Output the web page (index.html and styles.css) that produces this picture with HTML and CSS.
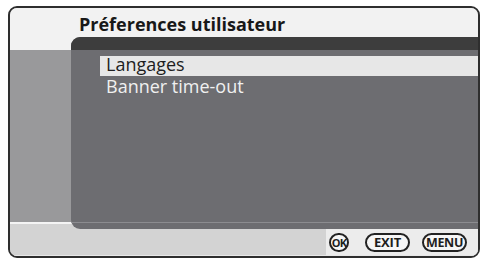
FILE: index.html
```html
<!DOCTYPE html>
<html lang="fr">
<head>
<meta charset="utf-8">
<title>Préferences utilisateur</title>
<link rel="stylesheet" href="styles.css">
</head>
<body>
<div class="frame">
  <div class="header-bg"></div>
  <div class="body-bg"></div>
  <div class="sep"></div>
  <div class="footer">
    <div class="footer-left"></div>
    <div class="footer-keys">
      <span class="key key-round">OK</span>
      <span class="key">EXIT</span>
      <span class="key key-menu">MENU</span>
    </div>
  </div>
  <h1 class="title">Préferences utilisateur</h1>
  <div class="panel">
    <div class="panel-bar"></div>
    <ul class="list">
      <li class="item selected">Langages</li>
      <li class="item">Banner time-out</li>
    </ul>
    <div class="panel-bottom"></div>
  </div>
</div>
</body>
</html>
```
FILE: styles.css
```css
html, body {
  margin: 0;
  padding: 0;
  background: #ffffff;
}
body {
  font-family: "Open Sans", "DejaVu Sans", sans-serif;
}
.frame {
  margin: 6px 0 0 8px;
  width: 468px;
  height: 248px;
  border: 2px solid #2e2e2e;
  border-radius: 9px;
  overflow: hidden;
  display: grid;
  grid-template-columns: 61px 1fr;
  grid-template-rows: 29px 13px 172px 2px 5px 27px;
  background: #d3d3d3;
}
.header-bg {
  grid-column: 1 / 3;
  grid-row: 1 / 3;
  background: #f2f2f2;
}
.body-bg {
  grid-column: 1 / 3;
  grid-row: 3 / 4;
  background: #99999b;
}
.sep {
  grid-column: 1 / 3;
  grid-row: 4 / 5;
  background: #f4f4f4;
}
.footer {
  grid-column: 1 / 3;
  grid-row: 5 / 7;
  display: flex;
  background: #d3d3d3;
  border-bottom: 1px solid #e8e8e8;
}
.footer-left {
  flex: 1;
}
.footer-keys {
  width: 152px;
  background: #ececec;
  display: flex;
  align-items: flex-end;
  padding: 0 11px 3px 3px;
  box-sizing: border-box;
}
.key {
  height: 19px;
  box-sizing: border-box;
  border: 2px solid #222222;
  border-radius: 10px;
  background: #f6f6f6;
  color: #1e1e1e;
  font-family: "Open Sans", "DejaVu Sans", sans-serif;
  font-weight: 700;
  font-size: 13px;
  letter-spacing: -0.2px;
  line-height: 15px;
  display: flex;
  align-items: center;
  justify-content: center;
  width: 45px;
  margin-left: 12px;
}
.key-round {
  width: 20px;
  margin-left: 0;
  font-size: 11px;
  letter-spacing: -0.8px;
  margin-right: 4px;
}
.key-menu {
  font-size: 12.5px;
  letter-spacing: -0.3px;
}
.title {
  grid-column: 2 / 3;
  grid-row: 1 / 2;
  margin: 0;
  padding: 4px 0 0 8px;
  font-size: 18px;
  font-weight: 700;
  line-height: 25px;
  color: #181818;
  white-space: nowrap;
}
.panel {
  grid-column: 2 / 3;
  grid-row: 2 / 6;
  background: #6d6d71;
  border-radius: 9px 0 0 9px;
  overflow: hidden;
  display: flex;
  flex-direction: column;
}
.panel-bar {
  height: 13px;
  background: #3d3d3d;
  flex: none;
}
.list {
  list-style: none;
  margin: 0;
  padding: 6px 0 0 29px;
  flex: 1;
}
.item {
  height: 20px;
  line-height: 16px;
  padding: 0 0 4px 6px;
  box-sizing: border-box;
  margin-bottom: 2px;
  font-size: 18px;
  color: #f0f0f0;
  white-space: nowrap;
}
.item.selected {
  background: #e7e7e7;
  color: #1e1e1e;
}
.panel-bottom {
  height: 7px;
  flex: none;
  box-sizing: border-box;
  border-top: 1px solid #8c8c90;
}
```
